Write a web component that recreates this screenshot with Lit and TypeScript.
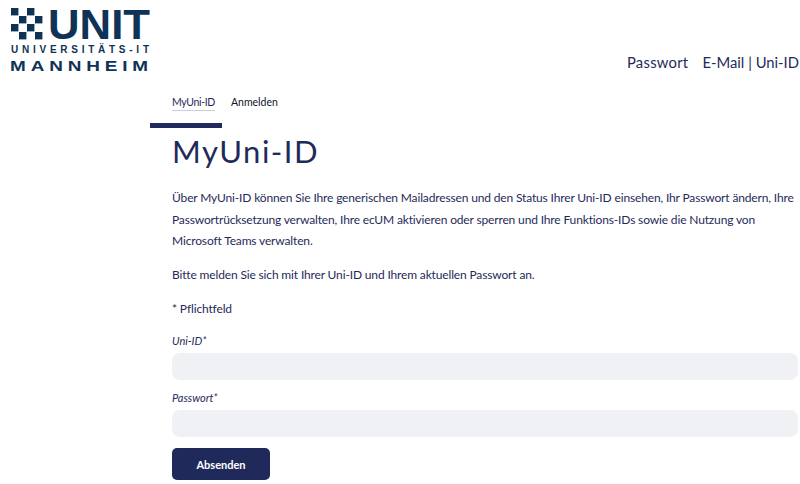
import { css, html, LitElement, svg } from "lit";
import { customElement } from "lit/decorators.js";

// squares of the checker mark in the logo
const CHECKER = [
  [11, 8], [27, 8], [19, 16], [35, 16], [11, 24], [27, 24], [19, 32], [35, 32],
];

@customElement("app-root")
export class AppRoot extends LitElement {
  render() {
    return html`
      <header class="top">
        <svg class="logo" width="160" height="76" viewBox="0 0 160 76">
          <g fill="#0f3356">
            ${CHECKER.map(([x, y]) => svg`<rect x=${x} y=${y} width="7.4" height="7.4"></rect>`)}
            <text class="unit" x="48" y="39" textLength="102" lengthAdjust="spacingAndGlyphs">UNIT</text>
            <text class="sub" x="11" y="53" textLength="138" lengthAdjust="spacing">UNIVERSITÄTS-IT</text>
            <text class="city" x="10" y="71" textLength="143" lengthAdjust="spacingAndGlyphs">MANNHEIM</text>
          </g>
        </svg>
        <nav class="service">
          <a class="password">Passwort</a>
          <a>E-Mail | Uni-ID</a>
        </nav>
      </header>
      <main class="content">
        <nav class="crumbs">
          <a class="current">MyUni-ID</a>
          <a>Anmelden</a>
        </nav>
        <div class="rule"></div>
        <h1>MyUni-ID</h1>
        <p>Über MyUni-ID können Sie Ihre generischen Mailadressen und den Status Ihrer Uni-ID einsehen, Ihr Passwort ändern, Ihre Passwortrücksetzung verwalten, Ihre ecUM aktivieren oder sperren und Ihre Funktions-IDs sowie die Nutzung von Microsoft Teams verwalten.</p>
        <p>Bitte melden Sie sich mit Ihrer Uni-ID und Ihrem aktuellen Passwort an.</p>
        <p>* Pflichtfeld</p>
        <form class="login">
          <label>Uni-ID*</label>
          <input type="text" />
          <label>Passwort*</label>
          <input type="password" />
          <button type="button">Absenden</button>
        </form>
      </main>
    `;
  }

  static styles = css`
    :host {
      display: block;
      height: 484px;
      overflow: hidden;
      background: #fff;
      color: #1f2a5a;
      font-family: Lato, "Open Sans", sans-serif;
    }
    .top {
      display: flex;
      justify-content: space-between;
      align-items: flex-end;
      height: 76px;
    }
    .logo text {
      font-family: "Liberation Sans", sans-serif;
      font-weight: 700;
    }
    .logo .unit {
      font-size: 43px;
    }
    .logo .sub {
      font-size: 10px;
    }
    .logo .city {
      font-size: 15.5px;
      letter-spacing: 4px;
    }
    .service {
      display: flex;
      gap: 14px;
      padding: 0 1px 5px 0;
      font-size: 14.8px;
    }
    .password {
      letter-spacing: 0.25px;
    }
    .content {
      margin-left: 172px;
      padding-top: 18px;
    }
    .crumbs {
      display: flex;
      gap: 16px;
      font-size: 10.5px;
      line-height: 16px;
      color: #10132a;
    }
    .current {
      color: #1f2a5a;
      letter-spacing: -0.35px;
      border-bottom: 1px solid #c9cfdf;
    }
    .rule {
      width: 72px;
      height: 5px;
      margin: 12px 0 0 -22px;
      background: #1f2a5a;
    }
    h1 {
      margin: 1px 0 14px;
      font-size: 31px;
      font-weight: 400;
      letter-spacing: 1.5px;
      line-height: 44px;
    }
    p {
      margin: 0 0 12.5px;
      font-size: 12px;
      letter-spacing: -0.15px;
      line-height: 21.5px;
    }
    .login {
      display: flex;
      flex-direction: column;
      align-items: flex-start;
    }
    label {
      font-size: 11px;
      font-style: italic;
      line-height: 18px;
    }
    input {
      box-sizing: border-box;
      width: 626px;
      height: 27px;
      margin: 3px 0 9px;
      border: none;
      border-radius: 8px;
      background: #f0f1f5;
    }
    button {
      width: 98px;
      height: 32px;
      margin-top: 2px;
      border: none;
      border-radius: 5px;
      background: #1f2a5a;
      color: #fff;
      font: 700 11px Lato, sans-serif;
    }
  `;
}
